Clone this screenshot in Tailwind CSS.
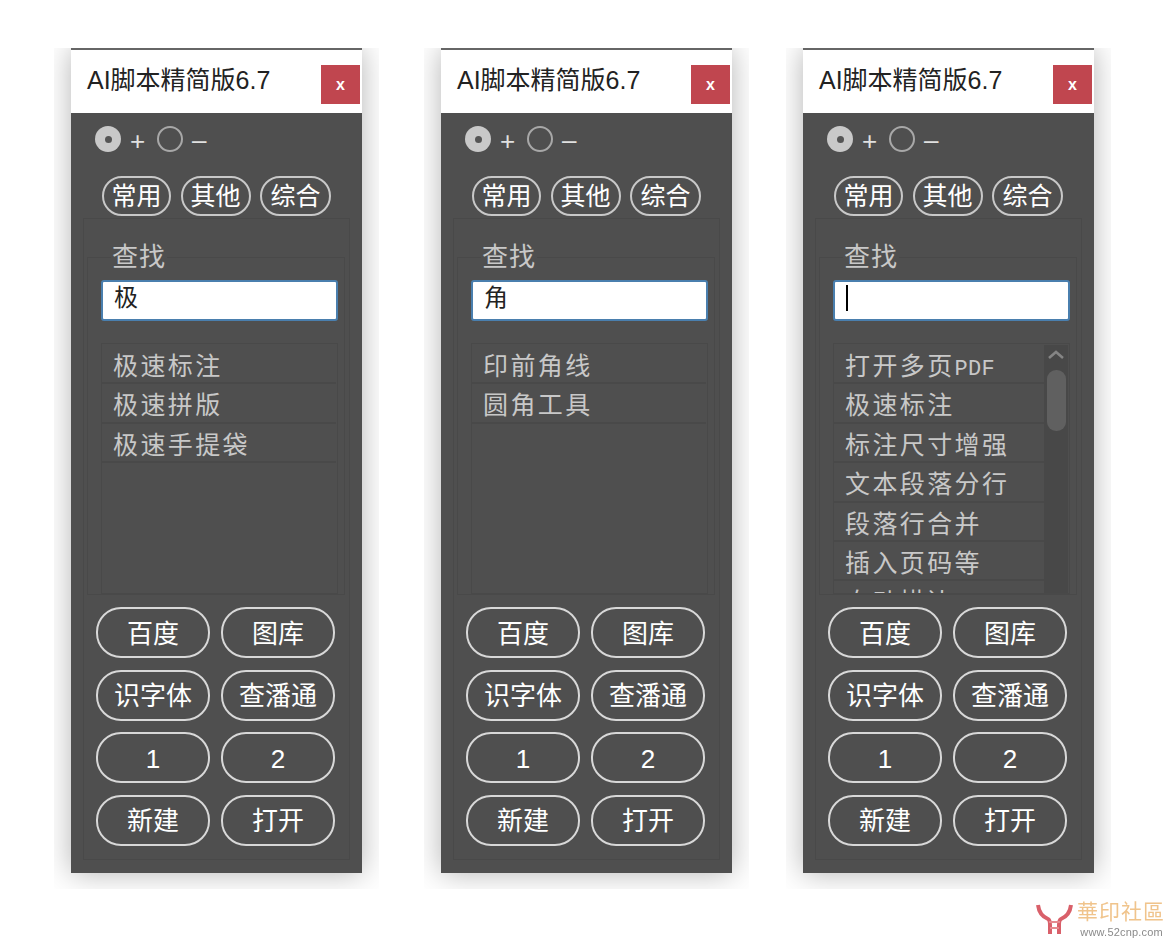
<!DOCTYPE html>
<html lang="zh-CN">
<head>
    <meta charset="UTF-8">
    <title>AI脚本精简版6.7</title>
    <script src="https://cdn.jsdelivr.net/npm/@tailwindcss/browser@4"></script>
</head>
<body class="bg-white font-['Liberation_Sans','Noto_Sans_CJK_SC',sans-serif]">
    <div class="relative h-[938px] w-[1166px] overflow-hidden">
        <div id="panels" class="flex pl-[54px] pt-[48px]"></div>

        <!-- watermark -->
        <div class="absolute left-[1036px] top-[900px] flex items-start gap-[4px] blur-[0.4px]">
            <svg width="37" height="34" viewBox="0 0 37 34" class="mt-[2px]" fill="none" stroke="#d9606a" stroke-width="4">
                <path d="M2 3c1 8 5 12 10 14 2 1 2 3 2 6v9M35 3c-1 8-5 12-10 14-2 1-2 3-2 6v9"/>
                <path d="M13 20h11M14 26h9" stroke-width="2" stroke="#e58a90"/>
            </svg>
            <div class="flex flex-col items-end">
                <div class="text-[21px] leading-[23px] tracking-[1px] text-[#f0c48c]">華印社區</div>
                <div class="mr-[2px] mt-[3px] text-[11px] leading-[12px] tracking-[0.2px] text-[#8a8a8a]">www.52cnp.com</div>
            </div>
        </div>
    </div>

    <script>
        const pdf = `<span class="font-['Liberation_Mono'] text-[22px] tracking-[0.3px]">PDF</span>`;
        const panels = [
            { value: '极', items: ['极速标注', '极速拼版', '极速手提袋'] },
            { value: '角', items: ['印前角线', '圆角工具'] },
            { value: '', caret: true, scroll: true, items: ['打开多页' + pdf, '极速标注', '标注尺寸增强', '文本段落分行', '段落行合并', '插入页码等', '自动描边'] },
        ];
        const tabs = [['常用', 'w-[69px]'], ['其他', 'w-[70px]'], ['综合', 'w-[71px]']];
        const actions = ['百度', '图库', '识字体', '查潘通', '1', '2', '新建', '打开'];

        function renderPanel(p, i) {
            const margin = i === 0 ? '' : (i === 1 ? 'ml-[45px]' : 'ml-[37px]');
            return `
            <div class="${margin} h-[841px] w-[325px] overflow-hidden bg-white px-[17px]">
                <div class="flex h-[825px] w-[291px] flex-col bg-[#4f4f4f] shadow-[0_0_28px_rgba(0,0,0,0.3)]">
                    <div class="flex h-[65px] shrink-0 justify-between border-t-2 border-[#666] bg-white pl-[16px] pr-[2px]">
                        <div class="mt-[13px] text-[25px] leading-[34px] text-[#222]">AI脚本精简版6.7</div>
                        <div class="mt-[15px] flex h-[39px] w-[39px] items-center justify-center bg-[#c0464f] text-[16px] font-bold text-white">x</div>
                    </div>

                    <div class="flex h-[52px] shrink-0 items-center pl-[24px] text-[#e0e0e0]">
                        <span class="flex h-[26px] w-[26px] items-center justify-center rounded-full bg-[#c9c9c9]"><span class="h-[7px] w-[7px] rounded-full bg-[#555]"></span></span>
                        <span class="ml-[9px] w-[27px] pt-[3px] text-[26px] leading-none">+</span>
                        <span class="h-[26px] w-[26px] rounded-full border-2 border-[#a8a8a8]"></span>
                        <span class="ml-[9px] pt-[2px] text-[26px] leading-none">–</span>
                    </div>

                    <div class="mt-[11px] flex shrink-0 gap-[9.5px] pl-[31px]">
                        ${tabs.map(t => `<div class="${t[1]} flex h-[40px] items-center justify-center rounded-full border-2 border-[#c8c8c8] pt-[2px] text-[25px] text-white">${t[0]}</div>`).join('')}
                    </div>

                    <div class="ml-[12px] mt-[2px] h-[642px] w-[267px] shrink-0 border border-[#494949] pt-[23px]">
                        <fieldset class="ml-[3px] h-[353px] w-[258px] border border-[#494949] pl-[13px] pr-[6px]">
                            <legend class="ml-[10px] h-[30px] px-[1px] text-[26px] leading-[30px] tracking-[1px] text-[#c8c8c8]">查找</legend>
                            <div class="mt-[8px] flex h-[41px] items-center rounded-[3px] border-2 border-[#4a7fae] bg-white pb-[5px] pl-[11px] text-[24px] leading-none text-[#222]">${p.caret ? '<span class="h-[26px] w-[2px] bg-black"></span>' : p.value}</div>
                            <div class="mt-[22px] flex h-[251px] overflow-hidden border border-[#494949] pr-[1px] pt-[1px]">
                                <div class="min-w-0 flex-1">
                                    ${p.items.map(item => `<div class="h-[39.4px] whitespace-nowrap border-b-2 border-[#494949] pl-[11px] pt-[2px] text-[25px] leading-[39px] tracking-[2.4px] text-[#c8c8c8]">${item}</div>`).join('')}
                                </div>
                                ${p.scroll ? `<div class="flex w-[24px] shrink-0 flex-col items-center bg-[#484848]">
                                    <svg width="18" height="10" viewBox="0 0 18 10" class="mt-[5px]" fill="none" stroke="#858585" stroke-width="2.5"><path d="M2 8l7-6 7 6"/></svg>
                                    <div class="mt-[10px] h-[61px] w-[19px] rounded-[9px] bg-[#606060]"></div>
                                </div>` : ''}
                            </div>
                        </fieldset>

                        <div class="ml-[12px] mt-[12px] grid w-[239px] grid-cols-[114px_114px] gap-x-[11px] gap-y-[11.67px]">
                            ${actions.map(a => `<div class="flex h-[51px] items-center justify-center rounded-[25px] border-2 border-[#d8d8d8] pt-[3px] text-[26px] text-white">${a}</div>`).join('')}
                        </div>
                    </div>
                </div>
            </div>`;
        }

        document.getElementById('panels').innerHTML = panels.map(renderPanel).join('');
    </script>
</body>
</html>
